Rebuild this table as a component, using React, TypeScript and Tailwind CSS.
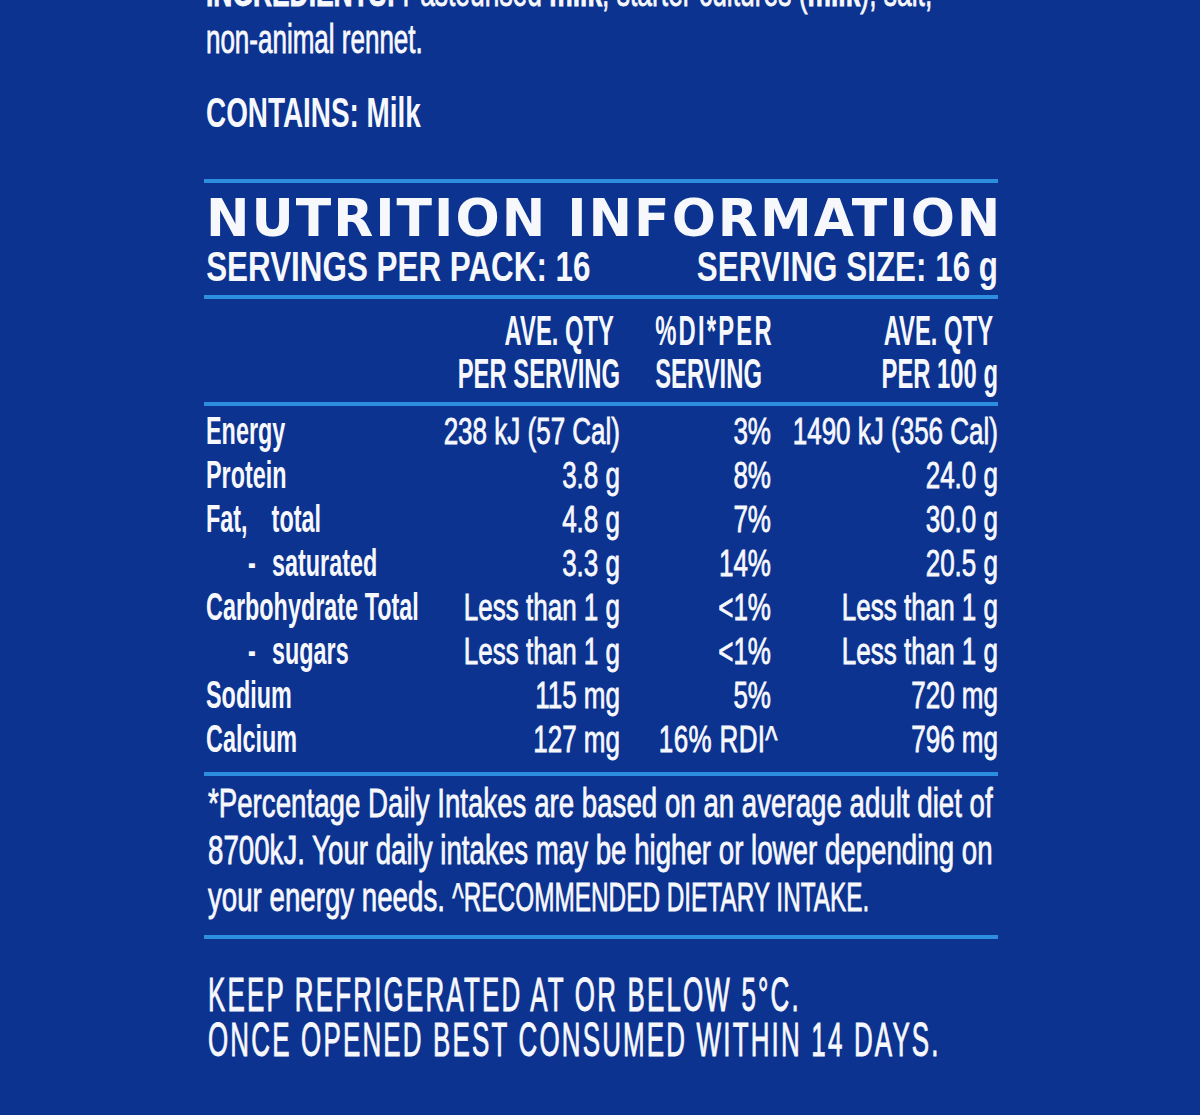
import React from "react";

type Row = { label: React.ReactNode; a: string; b: React.ReactNode; c: string };

const rows: Row[] = [
  { label: "Energy", a: "238 kJ (57 Cal)", b: "3%", c: "1490 kJ (356 Cal)" },
  { label: "Protein", a: "3.8 g", b: "8%", c: "24.0 g" },
  {
    label: (
      <span className="flex gap-[40px]">
        <span>Fat,</span>
        <span>total</span>
      </span>
    ),
    a: "4.8 g",
    b: "7%",
    c: "30.0 g",
  },
  {
    label: (
      <span className="flex gap-[27px] pl-[70px]">
        <span>-</span>
        <span>saturated</span>
      </span>
    ),
    a: "3.3 g",
    b: "14%",
    c: "20.5 g",
  },
  { label: "Carbohydrate Total", a: "Less than 1 g", b: "<1%", c: "Less than 1 g" },
  {
    label: (
      <span className="flex gap-[27px] pl-[70px]">
        <span>-</span>
        <span>sugars</span>
      </span>
    ),
    a: "Less than 1 g",
    b: "<1%",
    c: "Less than 1 g",
  },
  { label: "Sodium", a: "115 mg", b: "5%", c: "720 mg" },
  {
    label: "Calcium",
    a: "127 mg",
    b: <span className="-mr-[10px] tracking-[0.5px]">16% RDI^</span>,
    c: "796 mg",
  },
];

function Rule({ className }: { className: string }) {
  return <div className={`h-[4px] bg-[#2d8ee0] ${className}`} />;
}

export default function App() {
  return (
    <div className="flex h-[1115px] w-[1200px] flex-col overflow-hidden bg-[#0d3390] font-['Liberation_Sans',Arial,sans-serif] text-[#f7f8fc]">
      <div className="ml-[204px] flex w-[794px] flex-col">
        {/* Ingredients */}
        <div className="-mt-[31px] h-[47px] origin-left scale-x-[0.66] whitespace-nowrap pl-[3px] text-[40px] leading-[47px] [-webkit-text-stroke:0.8px_#f7f8fc]">
          <b>INGREDIENTS:</b> Pasteurised <b>milk</b>, starter cultures (<b>milk</b>), salt,
        </div>
        <div className="h-[47px] origin-left scale-x-[0.65] whitespace-nowrap pl-[3px] text-[40px] leading-[47px] [-webkit-text-stroke:0.8px_#f7f8fc]">
          non-animal rennet.
        </div>
        <div className="mt-[30px] h-[40px] origin-left scale-x-[0.664] whitespace-nowrap pl-[3px] text-[42px] font-bold leading-[40px]">
          CONTAINS: Milk
        </div>

        <Rule className="mt-[46px]" />

        <div className="mt-[15px] h-[40px] whitespace-nowrap pl-[2px] font-['DejaVu_Sans',sans-serif] text-[52px] font-bold leading-[40px] tracking-[2px]">
          NUTRITION INFORMATION
        </div>
        <div className="mt-[10px] grid h-[36px] grid-cols-2 whitespace-nowrap text-[43.3px] font-bold leading-[36px]">
          <div className="origin-left scale-x-[0.725] pl-[3px]">SERVINGS PER PACK: 16</div>
          <div className="flex origin-right scale-x-[0.725] justify-end">SERVING SIZE: 16 g</div>
        </div>

        <Rule className="mt-[11px]" />

        {/* Column headers */}
        <div className="mt-[10px] ml-[2px] grid w-[792px] grid-cols-[414px_151px_227px] whitespace-nowrap text-[43.3px] font-bold">
          <div className="flex h-[43px] origin-right scale-x-[0.55] justify-end pr-[11px] leading-[43px]">AVE. QTY</div>
          <div className="h-[43px] origin-left scale-x-[0.55] pl-[64px] leading-[43px] tracking-[4px]">%DI*PER</div>
          <div className="flex h-[43px] origin-right scale-x-[0.55] justify-end pr-[9px] leading-[43px]">AVE. QTY</div>
          <div className="flex h-[43px] origin-right scale-x-[0.55] justify-end leading-[43px]">PER SERVING</div>
          <div className="h-[43px] origin-left scale-x-[0.55] pl-[64px] leading-[43px]">SERVING</div>
          <div className="flex h-[43px] origin-right scale-x-[0.55] justify-end leading-[43px]">PER 100 g</div>
        </div>

        <Rule className="mt-[7px]" />

        {/* Nutrient rows */}
        <div className="mt-[3px] ml-[2px] grid w-[792px] grid-cols-[230px_184px_151px_227px] whitespace-nowrap">
          {rows.map((r, i) => (
            <React.Fragment key={i}>
              <div className="h-[44px] origin-left scale-x-[0.6] text-[39px] font-bold leading-[44px]">{r.label}</div>
              <div className="flex h-[44px] origin-right scale-x-[0.69] justify-end text-[37.7px] leading-[44px] [-webkit-text-stroke:0.8px_#f7f8fc]">
                {r.a}
              </div>
              <div className="flex h-[44px] origin-right scale-x-[0.69] justify-end text-[37.7px] leading-[44px] [-webkit-text-stroke:0.8px_#f7f8fc]">
                {r.b}
              </div>
              <div className="flex h-[44px] origin-right scale-x-[0.69] justify-end text-[37.7px] leading-[44px] [-webkit-text-stroke:0.8px_#f7f8fc]">
                {r.c}
              </div>
            </React.Fragment>
          ))}
        </div>

        <Rule className="mt-[11px]" />

        {/* Footnote */}
        <div className="mt-[4px] flex flex-col whitespace-nowrap pl-[4px] text-[41px] [-webkit-text-stroke:0.8px_#f7f8fc]">
          <div className="h-[47px] origin-left scale-x-[0.675] leading-[47px]">
            *Percentage Daily Intakes are based on an average adult diet of
          </div>
          <div className="h-[47px] origin-left scale-x-[0.675] leading-[47px]">
            8700kJ. Your daily intakes may be higher or lower depending on
          </div>
          <div className="h-[47px] origin-left scale-x-[0.675] leading-[47px]">
            your energy needs.{" "}
            <span className="inline-block origin-left scale-x-[0.88]">^RECOMMENDED DIETARY INTAKE.</span>
          </div>
        </div>

        <Rule className="mt-[14px]" />

        {/* Storage */}
        <div className="mt-[33px] flex flex-col whitespace-nowrap pl-[4px] text-[47.5px] tracking-[4px] [-webkit-text-stroke:0.9px_#f7f8fc]">
          <div className="h-[45px] origin-left scale-x-[0.546] leading-[45px]">KEEP REFRIGERATED AT OR BELOW 5°C.</div>
          <div className="h-[45px] origin-left scale-x-[0.546] leading-[45px]">ONCE OPENED BEST CONSUMED WITHIN 14 DAYS.</div>
        </div>
      </div>
    </div>
  );
}
